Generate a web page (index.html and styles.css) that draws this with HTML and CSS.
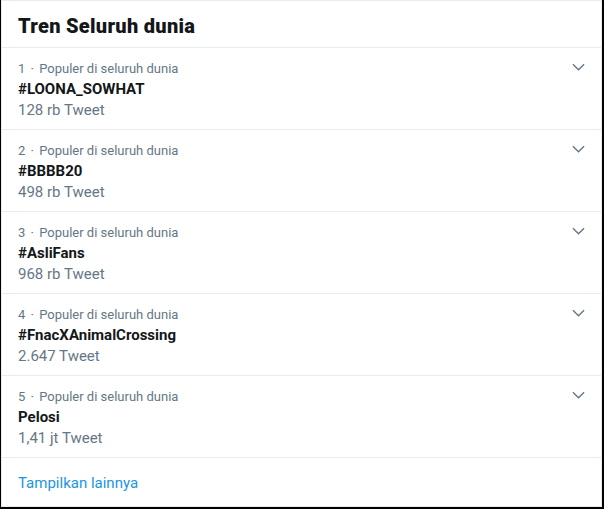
FILE: index.html
```html
<!DOCTYPE html>
<html lang="id">
<head>
  <meta charset="UTF-8" />
  <title>Tren Seluruh dunia</title>
  <link rel="stylesheet" href="styles.css">
</head>
<body>

  <div class="frame">
    <div class="card">
      <div class="header">Tren Seluruh dunia</div>

      <!-- trends -->
      <div class="trend">
        <div class="meta">1 <span class="dot">·</span> Populer di seluruh dunia</div>
        <div class="name">#LOONA_SOWHAT</div>
        <div class="count">128 rb Tweet</div>
        <svg class="caret" viewBox="0 0 14 8"><path d="M1 1l6 6 6-6" /></svg>
      </div>
      <div class="trend">
        <div class="meta">2 <span class="dot">·</span> Populer di seluruh dunia</div>
        <div class="name">#BBBB20</div>
        <div class="count">498 rb Tweet</div>
        <svg class="caret" viewBox="0 0 14 8"><path d="M1 1l6 6 6-6" /></svg>
      </div>
      <div class="trend">
        <div class="meta">3 <span class="dot">·</span> Populer di seluruh dunia</div>
        <div class="name">#AsliFans</div>
        <div class="count">968 rb Tweet</div>
        <svg class="caret" viewBox="0 0 14 8"><path d="M1 1l6 6 6-6" /></svg>
      </div>
      <div class="trend">
        <div class="meta">4 <span class="dot">·</span> Populer di seluruh dunia</div>
        <div class="name">#FnacXAnimalCrossing</div>
        <div class="count">2.647 Tweet</div>
        <svg class="caret" viewBox="0 0 14 8"><path d="M1 1l6 6 6-6" /></svg>
      </div>
      <div class="trend">
        <div class="meta">5 <span class="dot">·</span> Populer di seluruh dunia</div>
        <div class="name">Pelosi</div>
        <div class="count">1,41 jt Tweet</div>
        <svg class="caret" viewBox="0 0 14 8"><path d="M1 1l6 6 6-6" /></svg>
      </div>

      <div class="more">
        <a href="#">Tampilkan lainnya</a>
      </div>
    </div>
  </div>

</body>
</html>
```

FILE: styles.css
```css
* {
  box-sizing: border-box;
  font-family: Roboto, 'Liberation Sans', sans-serif;
}

body {
  margin: 0;
  background-color: white;
}

.frame {
  width: 604px;
  height: 509px;
  border-left: 1px solid #000;
  border-right: 2px solid #000;
  border-bottom: 2px solid #000;
  background-color: white;
}

.card {
  height: 100%;
  border: 1px solid #e6ecf0;
  display: flex;
  flex-direction: column;
}

.header {
  height: 47px;
  padding: 4px 16px 0;
  display: flex;
  align-items: center;
  font-size: 20px;
  font-weight: 900;
  letter-spacing: 0.3px;
  color: #14171a;
  border-bottom: 1px solid #e6ecf0;
}

.trend {
  position: relative;
  padding: 11px 16px 9px;
  height: 82px;
  border-bottom: 1px solid #e6ecf0;
}

.meta {
  font-size: 13px;
  line-height: 19px;
  color: #657786;
}

.dot {
  margin: 0 2px;
}

.name {
  font-size: 15px;
  line-height: 21px;
  font-weight: 700;
  color: #14171a;
  margin-top: 1px;
}

.count {
  font-size: 15px;
  line-height: 21px;
  color: #657786;
}

.caret {
  position: absolute;
  top: 15px;
  right: 16px;
  width: 13px;
  height: 8px;
  fill: none;
  stroke: #657786;
  stroke-width: 1.5;
}

.more {
  flex: 1;
  display: flex;
  align-items: center;
  padding: 2px 16px 0;
  font-size: 15px;
}

.more a {
  color: #1b95e0;
  text-decoration: none;
}
```
